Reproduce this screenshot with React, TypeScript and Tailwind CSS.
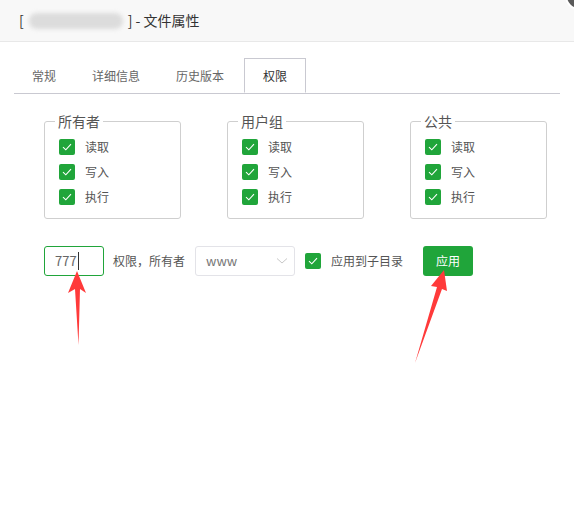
import React from "react";

const GREEN = "#20a53a";
const FONT = '"Noto Sans CJK SC", "Noto Sans", "Liberation Sans", sans-serif';

function Check({ size = 16 }: { size?: number }) {
  return (
    <span
      className="flex items-center justify-center rounded-[2px] bg-[#20a53a] shrink-0"
      style={{ width: size, height: size }}
    >
      <svg width="10" height="8" viewBox="0 0 10 8" fill="none">
        <path d="M1 4.2 L3.8 6.8 L9 1.2" stroke="#fff" strokeWidth="1.1" />
      </svg>
    </span>
  );
}

function PermGroup({ title }: { title: string }) {
  const rows = ["读取", "写入", "执行"];
  return (
    <fieldset className="w-[137px] border border-[#cfcfcf] rounded-[3px] pl-[10px]">
      <legend className="px-[3px] text-[14px] leading-[18px] text-[#555]">{title}</legend>
      <div className="pl-[4px] pt-[4px] pb-[8px]">
        {rows.map((r, i) => (
          <div key={r} className={i === 2 ? "h-[26px] flex items-center" : "h-[25px] flex items-center"}>
            <Check />
            <span className="ml-[10px] text-[12px] text-[#555]">{r}</span>
          </div>
        ))}
      </div>
    </fieldset>
  );
}

export default function App() {
  const tabs = ["常规", "详细信息", "历史版本", "权限"];
  return (
    <div
      className="relative w-[574px] h-[510px] bg-white overflow-hidden"
      style={{ fontFamily: FONT }}
    >
      {/* dialog header */}
      <div className="h-[42px] bg-[#f8f8f8] border-b border-[#e8e8e8] flex items-center pl-[19px] text-[14px] text-[#333]">
        <span>[</span>
        <span className="mx-[5px] w-[94px] h-[16px] rounded-[8px] bg-[#dcdcdc] blur-[2px]" />
        <span>] - 文件属性</span>
      </div>
      <span className="absolute left-[565px] top-[-18px] w-[28px] h-[28px] rounded-full bg-[#5a5a5a] border-2 border-white" />

      {/* tabs */}
      <div className="mx-[14px] mt-[16px] flex border-b border-[#c9c9d1]">
        {tabs.map((t, i) => (
          <div
            key={t}
            className={
              i === 3
                ? "ml-[2px] h-[35px] px-[18px] flex items-center text-[12px] text-[#333] border border-[#c9c9d1] border-b-white -mb-px bg-white"
                : "h-[35px] px-[17px] flex items-center text-[12px] text-[#666] border border-transparent"
            }
          >
            {t}
          </div>
        ))}
      </div>

      {/* permission groups */}
      <div className="flex gap-[46px] pl-[44px] pt-[18px]">
        <PermGroup title="所有者" />
        <PermGroup title="用户组" />
        <PermGroup title="公共" />
      </div>

      {/* bottom controls */}
      <div className="flex items-center pl-[44px] mt-[27px] text-[12px] text-[#555]">
        <div className="w-[60px] h-[30px] border border-[#20a53a] rounded-[3px] flex items-center pl-[10px] text-[13px] text-[#666]">
          777
          <span className="ml-[1px] w-px h-[18px] bg-[#333]" />
        </div>
        <span className="ml-[9px]">权限，所有者</span>
        <div className="ml-[10px] w-[100px] h-[30px] border border-[#e3e3e8] rounded-[3px] flex items-center justify-between pl-[10px] pr-[6px] text-[13px] text-[#777]">
          www
          <svg width="12" height="8" viewBox="0 0 12 8" fill="none">
            <path d="M1 1.5 L6 6 L11 1.5" stroke="#c8c8c8" strokeWidth="1" />
          </svg>
        </div>
        <span className="ml-[10px]">
          <Check />
        </span>
        <span className="ml-[10px]">应用到子目录</span>
        <button
          className="ml-[20px] w-[50px] h-[30px] rounded-[3px] text-white text-[12px]"
          style={{ backgroundColor: GREEN }}
        >
          应用
        </button>
      </div>

      {/* annotation arrows */}
      <svg className="absolute inset-0 pointer-events-none" width="574" height="510" viewBox="0 0 574 510">
        <polygon points="77,271 68,293 75,289 78.5,345 80,289 86,293" fill="#ff3a3a" />
        <polygon points="444,270 431,286 437,287 415,363 442,289 447,291" fill="#ff3a3a" />
      </svg>
    </div>
  );
}
